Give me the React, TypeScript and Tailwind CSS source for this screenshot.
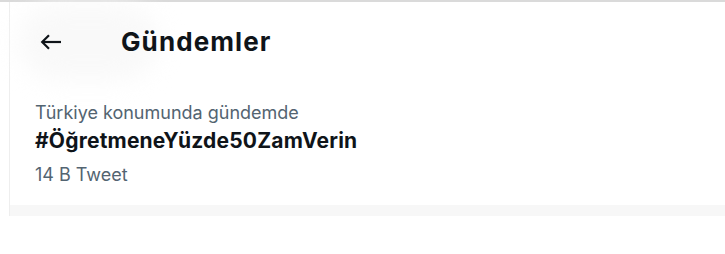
export default function App() {
  return (
    <div className="w-[725px] h-[254px] bg-white" style={{ fontFamily: 'Inter, "Liberation Sans", sans-serif' }}>
      <div className="h-[2px] bg-[#dadada]" />
      <div className="ml-[9px] border-l border-[#eeeeee] h-[214px] flex flex-col">
        <div className="relative flex items-center h-[80px]">
          <div className="absolute left-[8px] top-[2px] w-[140px] h-[76px] rounded-full bg-[#f9f9f9] blur-md" />
          <button className="relative ml-[30px] w-[22px] h-[16px] flex items-center justify-center text-[#0f1419]">
            <svg viewBox="0 0 22 16" className="w-[22px] h-[16px]" fill="none" stroke="currentColor" strokeWidth="2.2">
              <path d="M2 8H21" />
              <path d="M9 1.2L2.2 8L9 14.8" />
            </svg>
          </button>
          <h1 className="relative ml-[59px] text-[26px] font-bold text-[#0f1419] leading-none tracking-[1.1px]">Gündemler</h1>
        </div>
        <div className="pl-[25px] pt-[21px] flex flex-col">
          <span className="text-[18px] text-[#536471] leading-[20px]">Türkiye konumunda gündemde</span>
          <span className="mt-[6px] text-[21px] font-bold text-[#0f1419] leading-[24px] tracking-[0.2px]">#ÖğretmeneYüzde50ZamVerin</span>
          <span className="mt-[12px] text-[18px] text-[#536471] leading-[20px]">14 B Tweet</span>
        </div>
        <div className="flex-1" />
        <div className="h-[11px] bg-[#f7f7f7]" />
      </div>
    </div>
  );
}
